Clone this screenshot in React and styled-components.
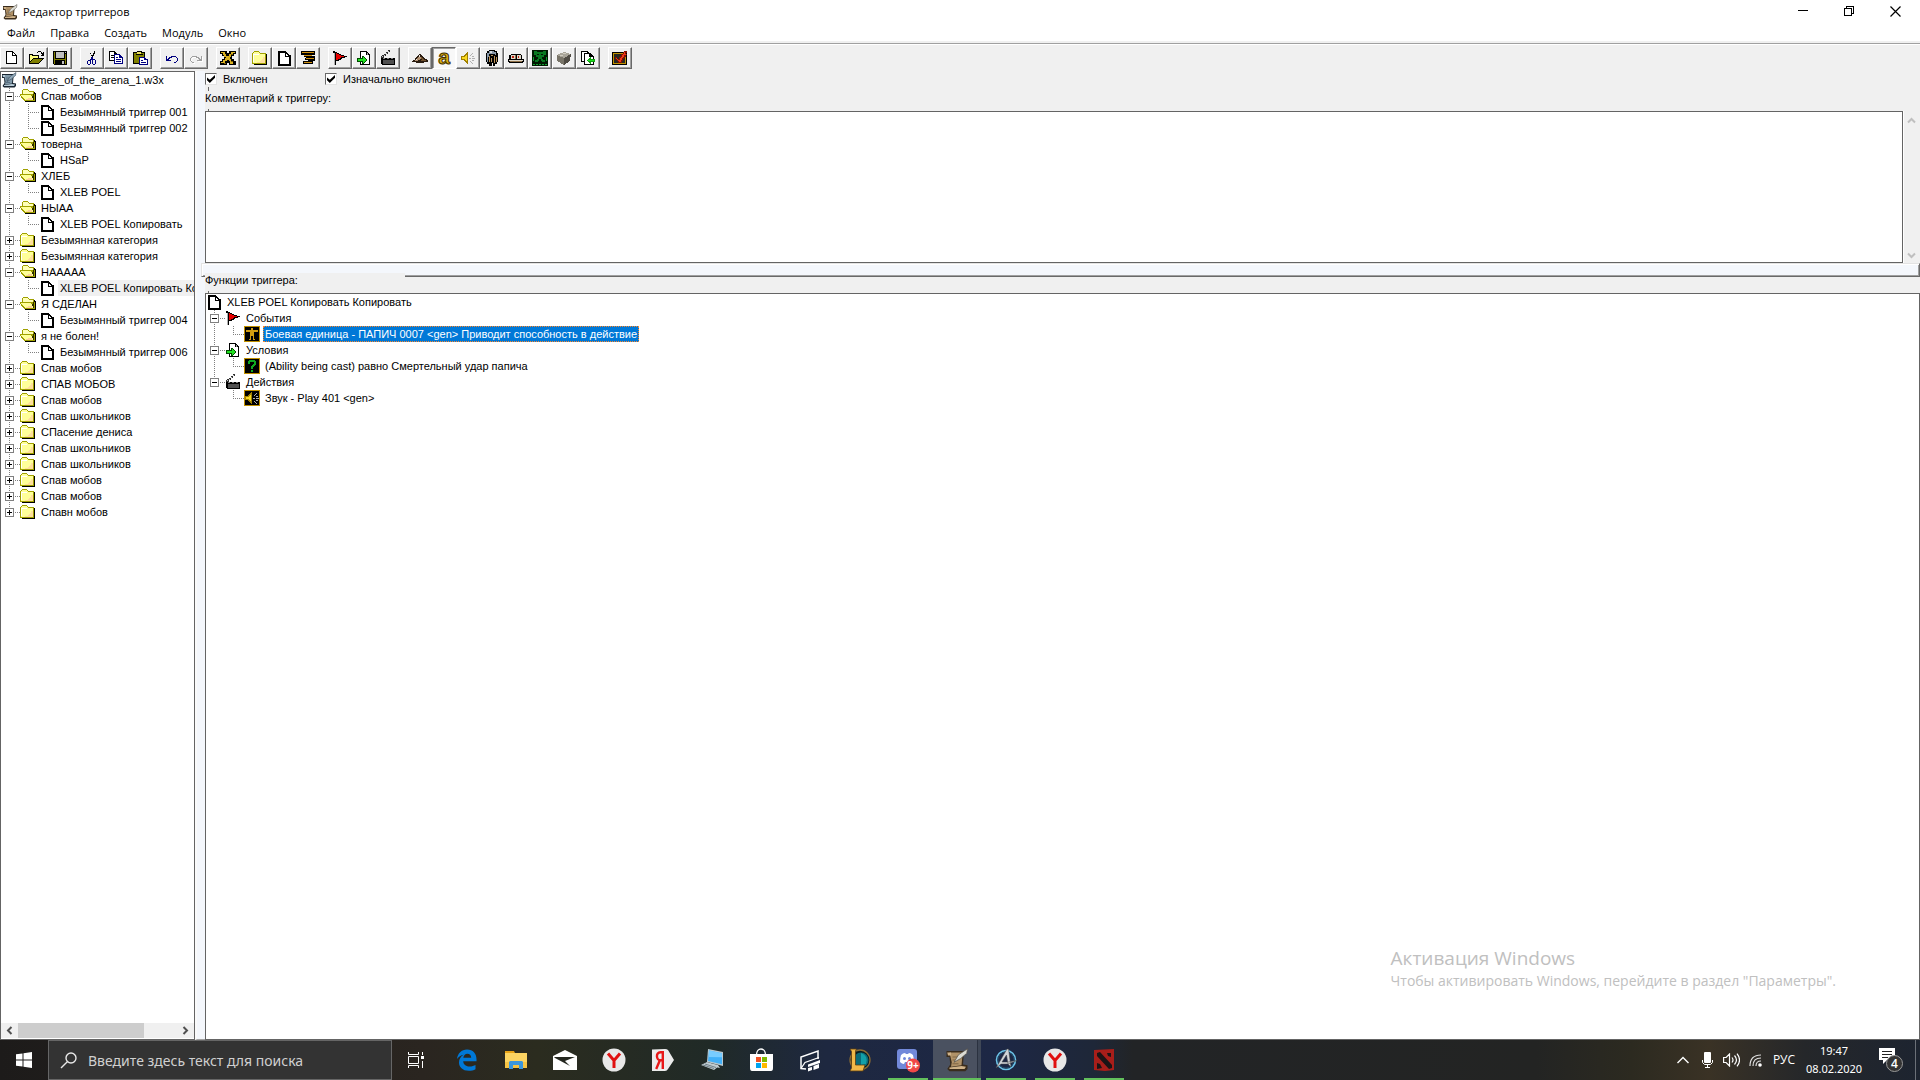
import React from 'react'
import styled, { createGlobalStyle, css } from 'styled-components'

const GlobalStyle = createGlobalStyle`
* {
    box-sizing: border-box;
}
body {
    margin: 0;
    overflow: hidden;
    background: #fff;
}
button, input, textarea {
    font: inherit;
    color: inherit;
    margin: 0;
    padding: 0;
    border: 0;
    border-radius: 0;
    background: none;
    outline: none;
}
ul {
    list-style: none;
    margin: 0;
    padding: 0;
}
svg {
    display: block;
    flex: none;
}
`

const uiFont = `'Open Sans', 'Noto Sans', sans-serif`
const wideFont = `'Noto Sans', 'Open Sans', sans-serif`
const edge = '#646464'

const Desktop = styled.div`
display: flex;
flex-direction: column;
height: 100vh;
font-family: 'Liberation Sans', Arial, sans-serif;
font-size: 11px;
line-height: 14px;
color: #000;
`
const EditorWindow = styled.main`
display: flex;
flex-direction: column;
flex: 1;
min-height: 0;
background: #f0f0f0;
`
const TitleBar = styled.header`
display: flex;
align-items: center;
gap: 5px;
height: 23px;
padding: 0 2px;
background: #fff;
font-family: ${uiFont};
font-size: 11px;
`
const TitleText = styled.h1`
flex: 1;
margin: 0;
font-size: 11px;
font-weight: 400;
`
const WindowButton = styled.button`
display: flex;
align-items: center;
justify-content: center;
width: 46px;
height: 20px;
margin-left: -5px;
&:hover {
    background: #e5e5e5;
}
`
const MenuBar = styled.nav`
display: flex;
height: 18px;
background: #fff;
font-family: ${uiFont};
font-size: 11px;
`
const MenuButton = styled.button`
padding: 0 8px 0 7px;
line-height: 20px;
&:hover {
    background: #e5f3ff;
}
`
const ToolBar = styled.div`
display: flex;
gap: 8px;
height: 30px;
padding-top: 4px;
border-top: 2px solid #f0f0f0;
box-shadow: inset 0 1px #a0a0a0, inset 0 2px #fff;
`
const ToolGroup = styled.div`
display: flex;
`
const ToolButton = styled.button`
display: flex;
align-items: center;
justify-content: center;
width: 24px;
height: 22px;
border: 1px solid;
border-color: #fff #696969 #696969 #fff;
box-shadow: inset -1px -1px #a0a0a0;
${p => p.$pressed && css`
    border-color: #696969 #fff #fff #696969;
    box-shadow: inset 1px 1px #a0a0a0;
    background: #f8f8f8;
`}
`
const Body = styled.div`
display: flex;
flex: 1;
min-height: 0;
`
const SidePane = styled.aside`
display: flex;
flex-direction: column;
flex: none;
width: 195px;
border: 1px solid ${edge};
background: #fff;
`
const TreeArea = styled.div`
flex: 1;
min-height: 0;
overflow: hidden;
`
const HScroll = styled.div`
display: flex;
align-items: center;
height: 15px;
margin-bottom: 1px;
background: #f0f0f0;
`
const ScrollArrow = styled.button`
display: flex;
align-items: center;
justify-content: center;
width: 17px;
height: 15px;
`
const HTrack = styled.div`
flex: 1;
align-self: stretch;
`
const HThumb = styled.div`
width: 79%;
height: 100%;
background: #cdcdcd;
`
const Splitter = styled.div`
flex: none;
width: 10px;
border-left: 2px solid #fafafa;
border-bottom: 1px solid #a0a0a0;
background: #f4f7fc;
cursor: col-resize;
`
const MainPane = styled.section`
display: flex;
flex-direction: column;
flex: 1;
min-width: 0;
`
const CheckRow = styled.div`
display: flex;
height: 16px;
padding-top: 2px;
`
const CheckLabel = styled.label`
display: flex;
align-items: center;
gap: 6px;
height: 12px;
width: 120px;
white-space: nowrap;
`
const CheckBox = styled.input`
appearance: none;
flex: none;
width: 12px;
height: 12px;
background: #fff;
border: 1px solid;
border-color: #696969 #e3e3e3 #e3e3e3 #696969;
&:checked::after {
    content: '';
    display: block;
    width: 8px;
    height: 8px;
    margin: 1px;
    background: #000;
    clip-path: polygon(0 30%, 35% 60%, 100% 0, 100% 35%, 35% 100%, 0 65%);
}
`
const CommentLabel = styled.label`
display: flex;
flex-direction: column;
height: 24px;
&::before, &::after {
    content: '';
    width: 1px;
    height: 4px;
    margin-left: 3px;
    background: #696969;
}
&::after {
    height: 2px;
    margin-top: auto;
}
`
const CommentBox = styled.div`
display: flex;
height: 152px;
`
const CommentInput = styled.textarea`
flex: 1;
resize: none;
border: 1px solid ${edge};
background: #fff;
overflow: hidden;
`
const VScroll = styled.div`
display: flex;
flex-direction: column;
justify-content: space-between;
align-items: center;
width: 17px;
padding: 2px 2px 0 0;
border-left: 1px solid #fff;
`
const HSplitter = styled.div`
flex: none;
height: 14px;
margin-left: -4px;
border: 1px solid;
border-color: #e3e3e3 #696969 #696969 #e3e3e3;
box-shadow: inset 1px 1px #fff, inset -1px -1px #a0a0a0;
background: #f4f7fc;
cursor: row-resize;
`
const FunctionsLabel = styled.h2`
position: relative;
width: 200px;
height: 20px;
margin: -4px 0 0;
background: #f0f0f0;
font-size: 11px;
font-weight: 400;
&::after {
    content: '';
    display: block;
    width: 1px;
    height: 2px;
    margin: 4px 0 0 3px;
    background: #696969;
}
`
const FunctionsPane = styled.div`
flex: 1;
min-height: 0;
border: 1px solid ${edge};
background: #fff;
`
const TreeRow = styled.div`
display: flex;
height: 16px;
white-space: nowrap;
`
// tree lines: a vertical one at 8px and, where the row hangs on it, a dash to the icon
const Gutter = styled.span`
flex: none;
width: 19px;
padding: 4px 0 0 4px;
background-image: repeating-linear-gradient(#808080 0 1px, transparent 1px 2px), repeating-linear-gradient(90deg, #808080 0 1px, transparent 1px 2px);
background-repeat: no-repeat;
background-position: 8px 0, 8px 8px;
background-size: 1px ${p => p.$half ? '8px' : '16px'}, ${p => p.$dash ? '11px' : '0'} 1px;
${p => p.$empty && css`
    background-image: none;
`}
`
const Expander = styled.button`
display: block;
width: 9px;
height: 9px;
border: 1px solid #808080;
background-color: #fff;
background-image: linear-gradient(#000, #000), linear-gradient(#000, #000);
background-repeat: no-repeat;
background-position: 1px 3px, 3px 1px;
background-size: 5px 1px, 1px ${p => p.$open ? '0' : '5px'};
`
const RowLabel = styled.span`
min-width: 0;
overflow: hidden;
margin-left: 3px;
padding: 0 2px;
line-height: 16px;
${p => p.$state === 'idle' && css`
    background: #f0f0f0;
`}
${p => p.$state === 'active' && css`
    background: #0078d7;
    color: #fff;
    outline: 1px dotted #ff8728;
    outline-offset: -1px;
`}
`
const Watermark = styled.div`
position: absolute;
right: 84px;
bottom: 89px;
font-family: ${uiFont};
color: #c0c0c0;
pointer-events: none;
white-space: nowrap;
`
const WatermarkTitle = styled.div`
font-size: 19px;
line-height: 25px;
`
const WatermarkText = styled.div`
font-size: 14px;
line-height: 20px;
`
const TaskBar = styled.footer`
display: flex;
flex: none;
height: 40px;
font-family: ${uiFont};
color: #fff;
background: linear-gradient(90deg, #1d1b1a 0%, #2a2520 22%, #2b2c1f 28%, #202a27 37%, #1e2840 43%, #1d2745 52%, #1e2738 57%, #222426 59%, #232423 80%, #2c2a20 85%, #3a3225 89%, #25272a 94%, #1d2430 100%);
`
const StartButton = styled.button`
display: flex;
align-items: center;
justify-content: center;
width: 48px;
`
const SearchBox = styled.label`
display: flex;
align-items: center;
gap: 11px;
width: 344px;
padding-left: 11px;
border: 1px solid #666;
background: #333;
`
const SearchInput = styled.input`
flex: 1;
min-width: 0;
font-family: ${wideFont};
font-size: 14px;
color: #d8d8d8;
&::placeholder {
    color: #d0d0d0;
    opacity: 1;
}
`
const TaskList = styled.div`
display: flex;
gap: 1px;
`
const TaskButton = styled.button`
display: flex;
align-items: center;
justify-content: center;
width: 48px;
&:first-child {
    margin-right: 2px;
}
${p => p.$running && css`
    background: linear-gradient(#62c05c, #62c05c) center bottom / 40px 2px no-repeat;
`}
${p => p.$current && css`
    background: linear-gradient(#62c05c, #62c05c) center bottom / 48px 2px no-repeat, linear-gradient(90deg, #4a5160 44px, #2b3240 44px 45px, #3f4756 45px);
`}
`
const Tray = styled.div`
display: flex;
align-items: center;
margin-left: auto;
`
const TrayButton = styled.button`
display: flex;
align-items: center;
justify-content: center;
width: 24px;
height: 40px;
`
const Language = styled.button`
width: 34px;
height: 40px;
font-size: 12px;
`
const Clock = styled.button`
width: 66px;
margin-right: 11px;
font-family: ${wideFont};
font-size: 11px;
line-height: 18px;
text-align: center;
`
const Notify = styled.button`
display: flex;
align-items: center;
height: 40px;
width: 37px;
`
const ShowDesktop = styled.button`
width: 5px;
height: 40px;
border-left: 1px solid #6b7078;
`

const Pix = ({ size = 16, children }) => (
    <svg width={size} height={size} viewBox={`0 0 ${size} ${size}`} shapeRendering="crispEdges" aria-hidden="true">{children}</svg>
)
const Draw = ({ w = 24, h = w, children }) => (
    <svg width={w} height={h} viewBox={`0 0 ${w} ${h}`} fill="none" aria-hidden="true">{children}</svg>
)

const DocIcon = () => (
    <Pix>
        <path fill="#000" d="M2 1h8v1h1v1h1v1h1v1h2v11H2z" />
        <path fill="#fff" d="M4 3h5v4h4v7H4zM10 4h1v1h1v1h-2z" />
    </Pix>
)
const NewIcon = () => (
    <Pix>
        <path fill="#000" d="M2 1h7v1h1v1h1v1h1v1h1v9H2z" />
        <path fill="#fff" d="M3 2h5v4h4v7H3zM9 3v2h2V4h-1V3z" />
    </Pix>
)
const OpenIcon = () => (
    <Pix>
        <path fill="#000" d="M10 1h3v1h-3zM9 2h1v1H9zM13 2h1v1h1V2h1v4h-3V5h1V4h-1zM1 4h4v1h6v3h5v1h-1v1h-1v1h-1v1h-1v1h-1v1H1z" />
        <path fill="#ffff80" d="M2 5h2v1h6v2H5v1H4v1H3v1H2z" />
        <path fill="#808000" d="M5 9h9v1h-1v1h-1v1h-1v1H2v-1h1v-1h1v-1h1z" />
    </Pix>
)
const SaveIcon = () => (
    <Pix>
        <path fill="#000" d="M1 1h14v14H2v-1H1z" />
        <path fill="#808000" d="M2 2h1v12H2zM13 4h1v10h-1zM3 9h10v1H3z" />
        <path fill="#c0c0c0" d="M4 2h8v6H4zM10 11h2v3h-2zM13 2h1v1h-1z" />
    </Pix>
)
const CutIcon = () => (
    <Pix>
        <path fill="#000" d="M5 1h1v3h1v2h1v1h1V6h1V4h1V1h-1v2H9v2H7V3H6V1z" />
        <path fill="#000080" d="M7 7h2v2h2v1h1v4h-1v1H9v-1H8v-4H7v4H6v1H4v-1H3v-3h1v-1h2V9h1z" />
        <path fill="#f0f0f0" d="M4 11h2v3H4zM9 10h2v4H9z" />
    </Pix>
)
const CopyIcon = () => (
    <Pix>
        <path fill="#000" d="M1 1h6v1h1v1h1v8H1z" />
        <path fill="#fff" d="M2 2h4v2h2v6H2z" />
        <path fill="#000" d="M3 5h3v1H3zM3 7h3v1H3z" />
        <path fill="#000080" d="M6 4h6v1h1v1h1v1h1v7H6z" />
        <path fill="#fff" d="M7 5h4v3h3v5H7z" />
        <path fill="#000080" d="M8 7h2v1H8zM8 9h5v1H8zM8 11h5v1H8z" />
    </Pix>
)
const PasteIcon = () => (
    <Pix>
        <path fill="#000" d="M5 1h5v1h3v12H1V2h4z" />
        <path fill="#808000" d="M2 3h10v10H2z" />
        <path fill="#e8e060" d="M5 2h4v2H5z" />
        <path fill="#000" d="M4 4h7v1H4z" />
        <path fill="#000080" d="M7 7h6v1h1v1h2v6H7z" />
        <path fill="#fff" d="M8 8h4v2h3v4H8z" />
        <path fill="#000080" d="M9 10h2v1H9zM9 12h5v1H9z" />
    </Pix>
)
const UndoIcon = () => (
    <Pix>
        <path fill="#000080" d="M2 6h1v3h1V8h1V7h2V6h5v1h1v1h1v3h-1v1h-1v1h-2v-1h2v-1h1V8h-1V7H8v1H6v1H5v1h2v1H2z" />
    </Pix>
)
const RedoIcon = () => {
    const arrow = 'M14 6h-1v3h-1V8h-1V7H9V6H4v1H3v1H2v3h1v1h1v1h2v-1H4v-1H3V8h1V7h4v1h2v1h1v1H9v1h5z'
    return (
        <Pix>
            <path fill="#fff" transform="translate(1 1)" d={arrow} />
            <path fill="#a0a0a0" d={arrow} />
        </Pix>
    )
}
const VarIcon = () => (
    <Pix>
        <path fill="#000" d="M0 1h7v2h2V1h7v3h-2v2h-2v3h2v2h2v4H9v-2H7v2H0v-4h2V9h2V6H2V4H0z" />
        <path fill="#d8b020" d="M1 2h4v2h1v2h3V4h2V2h4v1h-2v2h-2v2h-1v2h1v2h2v3h-3v-3H9v-1H7v1H5v2H1v-1h2v-2h2V8h1V7H4V5H3V3H1z" />
        <path fill="#806000" d="M4 13h2v1H4zM11 11h2v1h-2zM11 4h2v1h-2z" />
    </Pix>
)
const FolderIcon = () => (
    <Pix>
        <path fill="#000" d="M2 4h13v11H2z" />
        <path fill="#a0a000" d="M2 1h5v1h1v1h6v11H0V3h1V2h1z" />
        <path fill="#ffff99" d="M2 2h5v1h1v1h5v9H1V3h1z" />
        <path fill="#fff" d="M1 4h1v8H1zM2 4h5v1H2z" />
        <path fill="#ffd29c" d="M11 7h2v6H5v-1h3v-1h1v-1h1V9h1z" opacity=".7" />
    </Pix>
)
const FolderOpenIcon = () => (
    <Pix>
        <path fill="#000" d="M5 4h10v1h1v9H5v-1h9v-1z" />
        <path fill="#a0a000" d="M3 1h5v1h1v1h5v3h1v7H4v-1H3v-1H2v-1H1V8H0V6h2V2h1z" />
        <path fill="#ffffb8" d="M3 2h5v1h1v1h4v2H3z" />
        <path fill="#ffff99" d="M1 7h10v1h1v2h1v2H5v-1H4v-1H3V9H2V8H1z" />
        <path fill="#ffd29c" d="M8 10h4v2H6v-1h2z" />
        <path fill="#303000" d="M13 6h1v6h-1v-2h-1V8h1z" />
    </Pix>
)
const CommentIcon = () => (
    <Pix>
        <path fill="#000" d="M1 1h14v4H1zM4 5h11v3H4zM5 8h10v3H5zM3 11h10v3H3z" />
        <path fill="#f0f0f0" d="M11 5h4v1h-4zM4 7h2v1H4zM5 10h3v1H5z" />
        <path fill="#d09010" d="M2 2h12v1H2zM4 5h8v1H4zM6 8h8v1H6zM4 12h8v1H4z" />
    </Pix>
)
const FlagIcon = () => (
    <Pix>
        <path fill="#000" d="M1 1h2v1h2v1h2v1h2v1h3v1h3v1h-2v1h-3v1H9v1H7v1H4v4H2V3H1z" />
        <path fill="#b0b0b0" d="M2 3h1v12H2z" />
        <path fill="#e80000" d="M4 3h1v1h2v1h2v1h3v1H9v1H8v1H6v1H4z" />
    </Pix>
)
const ConditionIcon = () => (
    <Pix>
        <path fill="#000" d="M4 1h7v1h1v1h1v1h1v11H4z" />
        <path fill="#fff" d="M5 2h5v3h3v9H5z" />
        <path fill="#999" d="M11 3h1v2h-1z" />
        <path fill="#004800" d="M1 8h5V6h2v1h1v1h1v1h1v2h-1v1H9v1H8v1H6v-2H1z" />
        <path fill="#20e020" d="M2 9h5V7h1v1h1v1h1v2H9v1H8v1H7v-2H2z" />
    </Pix>
)
const ActionIcon = () => (
    <Pix>
        <path fill="#303030" d="M8 0h2v2H8v2H6v2H4v2H1V6h1V5h2V4h2V2h2z" />
        <path fill="#000" d="M1 8h14v7H2v-1H1z" />
        <path fill="#c8c8c8" d="M8 1h1v1H8zM6 3h1v1H6zM4 5h1v1H4zM2 6h1v1H2z" />
        <path fill="#505050" d="M3 10h11v4H3z" />
        <path fill="#808080" d="M3 8h2v1H3zM7 8h2v1H7zM11 8h2v1h-2z" />
    </Pix>
)
const TerrainIcon = () => (
    <Pix>
        <path fill="#2a1c10" d="M7 4h2v1h1v1h1v1h1v1h1v1h2v1h1v2h-4v1H4v-1H0v-1h1v-1h2V8h1V7h1V6h1V5h1z" />
        <path fill="#b09070" d="M7 5h1v2h1v2H8v1H6v1H3v-1h2V8h1V7h1z" />
        <path fill="#e8e0d8" d="M7 5h1v2H7zM4 9h1v1H4z" />
        <path fill="#70502c" d="M9 7h1v1h1v1h1v1h2v1H9v-1h1z" />
    </Pix>
)
const UnitDataIcon = () => (
    <svg width="16" height="16" viewBox="0 0 16 16" aria-hidden="true">
        <text x="8" y="14" textAnchor="middle" fontFamily="Liberation Sans, sans-serif" fontSize="21" fontWeight="700" fill="#e0b010" stroke="#403000" strokeWidth="1">a</text>
    </svg>
)
const SoundIcon = ({ dark }) => (
    <Pix>
        {dark && <path fill="#c09000" d="M0 0h16v16H0z" />}
        {dark && <path fill="#000" d="M1 1h14v14H1z" />}
        <path fill="#a08000" d="M7 2h1v12H7v-1H6v-1H5v-1H4v-1H1V6h3V5h1V4h1V3h1z" />
        <path fill="#f8d820" d="M6 5h1v6H6v-1H5V9H2V7h3V6h1z" />
        <path fill="#b0b0b0" d="M9 8h2v1H9zM12 8h3v1h-3zM10 5h1V4h1V3h1v1h-1v1h-1v1h-1zM12 6h2v1h-2zM10 11h1v1h1v1h1v1h-1v-1h-1v-1h-1zM12 10h2v1h-2z" />
    </Pix>
)
const HeroIcon = () => (
    <Pix>
        <path fill="#000" d="M5 0h6v1h2v2h1v9h-1v2h-2v2H9v-3H8v3H5v-2H3v-2H2V3h1V1h2z" />
        <path fill="#8898a8" d="M5 1h5v1h2v3h-1V4H5v3H4v5H3V3h2z" />
        <path fill="#d0d8e0" d="M6 1h2v2H6z" />
        <path fill="#b89058" d="M5 6h1v6H5zM7 5h2v1H7zM10 6h1v7h-1zM7 8h1v4H7zM12 7h1v5h-1z" />
    </Pix>
)
const CampIcon = () => (
    <Pix>
        <path fill="#000" d="M3 4h10v1h1v4h2v3h-1v1H1v-1H0V9h1V5h2z" />
        <path fill="#e0d8c8" d="M3 5h4v4H3zM9 5h4v4H9zM1 10h14v1H1z" />
        <path fill="#c02010" d="M4 6h2v2H4zM10 6h1v2h-1z" />
        <path fill="#907048" d="M2 11h12v1H2zM7 5h1v4H7z" />
    </Pix>
)
const GridIcon = () => (
    <Pix>
        <path fill="#001800" d="M0 0h16v16H0z" />
        <path fill="#087820" d="M2 1h3v1h6V1h3v4h-2v2h-2v2h1v1h2v2h-3v-1H9V9H7v2H6v1H3v-2h2V9h1V7H4V5H2z" />
        <path fill="#001800" d="M5 4h2v1H5zM9 4h2v1H9z" />
        <path fill="#10a030" d="M1 14h2v1H1zM4 14h2v1H4zM7 14h2v1H7zM10 14h2v1h-2zM13 14h2v1h-2zM1 7h1v4H1zM14 7h1v4h-1z" />
    </Pix>
)
const CubeIcon = () => (
    <Pix>
        <path fill="#a8a498" d="M1 5l7-3 7 2-7 4z" />
        <path fill="#787468" d="M1 5l7 3v7l-7-4z" />
        <path fill="#504c44" d="M8 8l7-4-1 7-6 4z" />
        <path fill="#d0ccc0" d="M7 3h3v1H7zM4 5h3v1H4z" />
    </Pix>
)
const ImportIcon = () => (
    <Pix>
        <path fill="#000" d="M1 1h7v1h1v1h2v1h1v1h1v1h1v9H4v-3H1z" />
        <path fill="#fff" d="M2 2h5v1H4v8H2zM5 4h4v3h4v7H5z" />
        <path fill="#10a010" d="M7 10h1V9h1V8h1V7h1v2h4v3h-4v2h-1v-1H9v-1H8v-1H7z" />
        <path fill="#20e020" d="M8 10h6v1H8z" />
    </Pix>
)
const CheckIcon = () => (
    <Pix>
        <path fill="#000" d="M0 2h15v13H0z" />
        <path fill="#c09000" d="M1 3h13v11H1z" />
        <path fill="#282820" d="M2 4h11v9H2z" />
        <path fill="#801000" d="M3 7h2v2h2V7h1V6h1V4h2V2h1V1h3v2h-1v1h1v1h-1v2h-1v1h-1v1h-1v2h-1v2H6v-2H5v-1H4V9H3z" />
        <path fill="#f03818" d="M4 8h1v1h1v1h2V8h1V7h1V5h1V4h1V2h1v2h1v1h-2v2h-1v1h-1v2H9v2H7v-1H6v-1H5V9H4z" />
    </Pix>
)
const UnitIcon = () => (
    <Pix>
        <path fill="#c09000" d="M0 0h16v16H0z" />
        <path fill="#000" d="M1 1h14v14H1z" />
        <path fill="#d09c10" d="M7 2h2v2H7zM2 4h12v2h-4v8H9v-4H7v4H6V6H2zM5 13h2v1H5zM9 13h2v1H9z" />
    </Pix>
)
const QuestionIcon = () => (
    <Pix>
        <path fill="#c09000" d="M0 0h16v16H0z" />
        <path fill="#000" d="M1 1h14v14H1z" />
        <path fill="#10a820" d="M5 2h6v1h1v4h-1v1h-1v1H9v2H7V8h1V7h1V6h1V4H6v2H4V3h1zM7 12h2v2H7z" />
    </Pix>
)
const ScrollIcon = ({ size = 16, blue }) => (
    <svg width={size} height={size} viewBox="0 0 16 16" aria-hidden="true">
        <path fill={blue ? '#182430' : '#3a2c1c'} d="M1 2h11.500v3l-.5 6 3 .500v2.500l-1.500 1.500H3L1.500 14l2-3-.5-5H1z" />
        <path fill={blue ? '#8098a8' : '#b09268'} d="M3 3h8.500v3L11 11.500l-7 1 .5-3z" />
        <path fill={blue ? '#b8ccd8' : '#cfb288'} d="M1.500 3H4v2H2zM3 13l8-1 3 .500-1 1.500H3z" />
        <path stroke={blue ? '#405868' : '#7c6242'} strokeWidth=".6" fill="none" d="M5 6h3M5 8h2M5 10.500h4" />
        <path fill={blue ? '#90a8b8' : '#dcdcd4'} stroke={blue ? '#283848' : '#555048'} strokeWidth=".5" d="M6 9.500l3-5L15 .500l-.500 3-4 3.500z" />
    </svg>
)

const SearchIcon = () => (
    <Draw w={17}>
        <circle cx="11" cy="6" r="5" stroke="#e8e8e8" strokeWidth="1.4" />
        <path d="M7.3 9.7L1 16" stroke="#e8e8e8" strokeWidth="1.4" />
    </Draw>
)
const WindowsIcon = () => (
    <Draw w={16}>
        <path fill="#fff" d="M0 2.3l6.5-.9v6.1H0zM7.5 1.2L16 0v7.5H7.5zM0 8.5h6.5v6.1L0 13.7zM7.5 8.5H16V16l-8.5-1.2z" />
    </Draw>
)
const TaskViewIcon = () => (
    <Draw w={16}>
        <path stroke="#fff" d="M.5 0v2.5h10V0M.5 4.5h10v7H.5zM.5 16v-2.500h10V16M14.500 0v3M14.500 9v7" />
        <path fill="#fff" d="M13 4h3v3h-3z" />
    </Draw>
)
const EdgeIcon = () => (
    <Draw w={22}>
        <path fill="#0078d7" d="M1 10C1.600 4.500 5.500.5 11 .5c6 0 9.500 4 9.500 9.800v2H7.200c.2 3.700 3.300 5.200 6.500 5.200 2.300 0 4.200-.6 5.800-1.500v4.200c-1.800 1-4.200 1.600-6.700 1.600C6.500 21.800 3 18 3 13.500c0-3.400 1.800-6.200 4.700-7.700C4.800 6.300 2.600 7.700 1 10zm6.300-1.200h7.900C15.100 6 13.600 4.700 11.400 4.700c-2.400 0-3.700 1.800-4.100 4.100z" />
    </Draw>
)
const ExplorerIcon = () => (
    <Draw w={22} h={20}>
        <path fill="#e8a317" d="M0 1h9l1 2H0z" />
        <path fill="#fcd462" d="M0 3h22v15H0z" />
        <path fill="#f5c344" d="M0 12h22v6H0z" />
        <path fill="#3a96dd" d="M4 19v-7l1-1h12l1 1v7h-4v-4H8v4z" />
    </Draw>
)
const MailIcon = () => (
    <Draw w={24} h={20}>
        <path fill="#fff" d="M0 6l12-6 12 6v14H0z" />
        <path fill="#24271f" d="M1 7h21l-10 4 5 5-15-8z" />
    </Draw>
)
const YandexBrowserIcon = () => (
    <Draw w={24}>
        <circle cx="12" cy="12" r="11.500" fill="#e8e8e8" />
        <path stroke="#e01010" strokeWidth="3" d="M6 5.500l6 7 6-7M12 12v8" />
    </Draw>
)
const YandexIcon = () => (
    <Draw w={24}>
        <path fill="#ececec" d="M1 1.500L14 1q2 0 3 1l6 10-6 9q-1 2-3 2H1z" />
        <path stroke="#e81818" strokeWidth="2.400" d="M11.800 21V4.200H9.500c-5 0-4.500 8 0 8h2M9 12L5.200 21" />
    </Draw>
)
const ComputerIcon = () => (
    <Draw w={24}>
        <path fill="#b8c8d0" d="M8 1l15 3v14L7 14z" />
        <path fill="#42b0f8" d="M9 2.500l13 2.800v10.900L8 13z" />
        <path fill="#78ccff" d="M9 2.500l13 2.800v4L9 9z" />
        <path fill="#c0ccd2" d="M1 17l6-3 12 4-5 4zM10 15l8 2 2 3-5-1z" />
        <path stroke="#708088" d="M3 17l11 3.500M5 16l11 3.500" />
    </Draw>
)
const StoreIcon = () => (
    <Draw w={24}>
        <path stroke="#fff" strokeWidth="1.300" d="M7.500 7c0-8 9-8 9 0" />
        <path fill="#fff" d="M1 6h23v14q0 3-2 3H3q-2 0-2-3z" />
        <path fill="#f25022" d="M7 9h5v5H7z" />
        <path fill="#7fba00" d="M13 9h5v5h-5z" />
        <path fill="#00a4ef" d="M7 15h5v5H7z" />
        <path fill="#ffb900" d="M13 15h5v5h-5z" />
    </Draw>
)
const PanelsIcon = () => (
    <Draw w={24}>
        <path stroke="#fff" strokeWidth="1.500" d="M8 21l-5-.500V9l17-6v8" />
        <path stroke="#fff" strokeWidth="1.300" d="M3 20.500l4-6L21 9.500" />
        <path fill="#fff" d="M10 16.500L22 12v3l-12 4zM10 20l4-1v3l-4 1.500zM15.500 18l5.500-2v4l-5.500 2z" />
    </Draw>
)
const LeagueIcon = () => (
    <Draw w={24}>
        <circle cx="13" cy="12" r="10" fill="#071c22" stroke="#8c6c34" strokeWidth="1.300" />
        <circle cx="14" cy="12" r="7.500" fill="#0b6b78" />
        <path fill="#12a0a8" d="M14 5q8 3 5 11l-5 1z" />
        <path fill="#f0b848" stroke="#5c3c10" strokeWidth=".8" d="M3 1h6.500l-1 2v14H18l-2 6H3l1.500-3V3.500z" />
    </Draw>
)
const DiscordIcon = () => (
    <svg width="24" height="26" viewBox="0 0 24 26" aria-hidden="true">
        <rect x="1" y="2" width="20" height="20" rx="3" fill="#7289da" />
        <path fill="#fff" d="M5 8q2-2 4-2l1 1h2l1-1q2 0 4 2 1 4 1 7-2 2-4 2l-1-2H9l-1 2q-2 0-4-2 0-4 1-7z" />
        <circle cx="8.500" cy="11.500" r="1.500" fill="#7289da" />
        <circle cx="13.500" cy="11.500" r="1.500" fill="#7289da" />
        <circle cx="17" cy="18.500" r="7" fill="#f04747" />
        <text x="17" y="22" textAnchor="middle" fontFamily="Open Sans, sans-serif" fontSize="10" fontWeight="700" fill="#fff">9+</text>
    </svg>
)
const AIcon = () => (
    <Draw w={24}>
        <circle cx="12" cy="12" r="9.500" stroke="#6cc4e8" strokeWidth="1.600" />
        <circle cx="12" cy="12" r="8" stroke="#204868" />
        <path fill="#d0d4d8" stroke="#444" strokeWidth=".5" d="M2 20L13 1h1.500L17 19l-3-3-1.500-9L8 14h6l9-1.500-9 3.500H7z" />
    </Draw>
)
const DotaIcon = () => (
    <Draw w={22}>
        <path fill="#a81e1a" d="M1 1l20-1v21l-9 1-11-1z" />
        <path fill="#1c1416" d="M4 4l3-1 12 13v3l-3 1L4 7zM14 4l4 0 0 4-3-1zM4 14l3 1 2 4-5 1z" />
    </Draw>
)
const DarkSoundIcon = () => <SoundIcon dark />
const EditorTaskIcon = () => <ScrollIcon size={24} />

const toolGroups = [
    [['Новый', NewIcon], ['Открыть', OpenIcon], ['Сохранить', SaveIcon]],
    [['Вырезать', CutIcon], ['Копировать', CopyIcon], ['Вставить', PasteIcon]],
    [['Отменить', UndoIcon], ['Повторить', RedoIcon]],
    [['Переменные', VarIcon]],
    [['Новая категория', FolderIcon], ['Новый триггер', DocIcon], ['Новый комментарий', CommentIcon]],
    [['Новое событие', FlagIcon], ['Новое условие', ConditionIcon], ['Новое действие', ActionIcon]],
    [
        ['Ландшафт', TerrainIcon], ['Триггеры', UnitDataIcon, true], ['Звук', SoundIcon], ['Объекты', HeroIcon],
        ['Кампания', CampIcon], ['ИИ', GridIcon], ['Менеджер объектов', CubeIcon], ['Импорт', ImportIcon],
    ],
    [['Проверить карту', CheckIcon]],
]

const category = (label, ...children) => ({
    label,
    icon: children.length ? FolderOpenIcon : FolderIcon,
    children: children.map(name => ({ label: name, icon: DocIcon })),
})
const triggers = [
    category('Спав мобов', 'Безымянный триггер 001', 'Безымянный триггер 002'),
    category('товерна', 'HSaP'),
    category('ХЛЕБ', 'XLEB POEL'),
    category('НЫАА', 'XLEB POEL Копировать'),
    category('Безымянная категория'),
    category('Безымянная категория'),
    category('НААААА', 'XLEB POEL Копировать Копировать'),
    category('Я СДЕЛАН', 'Безымянный триггер 004'),
    category('я не болен!', 'Безымянный триггер 006'),
    category('Спав мобов'),
    category('СПАВ МОБОВ'),
    category('Спав мобов'),
    category('Спав школьников'),
    category('СПасение дениса'),
    category('Спав школьников'),
    category('Спав школьников'),
    category('Спав мобов'),
    category('Спав мобов'),
    category('Спавн мобов'),
]
triggers[6].children[0].state = 'idle'

const functions = [
    { label: 'События', icon: FlagIcon, children: [{ label: 'Боевая единица - ПАПИЧ 0007 <gen> Приводит способность в действие', icon: UnitIcon, state: 'active' }] },
    { label: 'Условия', icon: ConditionIcon, children: [{ label: '(Ability being cast) равно Смертельный удар папича', icon: QuestionIcon }] },
    { label: 'Действия', icon: ActionIcon, children: [{ label: 'Звук - Play 401 <gen>', icon: DarkSoundIcon }] },
]

const Tree = ({ root, rootIcon, items }) => (
    <div>
        <TreeRow>{rootIcon}<RowLabel>{root}</RowLabel></TreeRow>
        <ul>
            {items.map((item, i) => {
                const last = i === items.length - 1
                const open = item.children.length > 0
                return (
                    <li key={i}>
                        <TreeRow>
                            <Gutter $dash $half={last}>
                                <Expander $open={open} aria-label={open ? 'Свернуть' : 'Развернуть'} />
                            </Gutter>
                            <item.icon />
                            <RowLabel>{item.label}</RowLabel>
                        </TreeRow>
                        <ul>
                            {item.children.map((child, n) => (
                                <li key={n}>
                                    <TreeRow>
                                        <Gutter $empty={last} />
                                        <Gutter $dash $half={n === item.children.length - 1} />
                                        <child.icon />
                                        <RowLabel $state={child.state}>{child.label}</RowLabel>
                                    </TreeRow>
                                </li>
                            ))}
                        </ul>
                    </li>
                )
            })}
        </ul>
    </div>
)

const Arrow = ({ turn = 0, color = '#505050' }) => (
    <svg width="9" height="9" viewBox="0 0 9 9" aria-hidden="true">
        <path d="M1 6.500L4.500 3 8 6.500" fill="none" stroke={color} strokeWidth="2" transform={`rotate(${turn} 4.500 4.500)`} />
    </svg>
)

const tasks = [
    ['Edge', EdgeIcon], ['Проводник', ExplorerIcon], ['Почта', MailIcon], ['Яндекс.Браузер', YandexBrowserIcon],
    ['Яндекс', YandexIcon], ['Компьютер', ComputerIcon], ['Магазин', StoreIcon], ['Панели', PanelsIcon],
    ['League of Legends', LeagueIcon], ['Discord', DiscordIcon, true],
    ['Редактор', EditorTaskIcon, true, true],
    ['Arc', AIcon, true], ['Яндекс', YandexBrowserIcon, true], ['Dota', DotaIcon, true],
]

const App = () => {
    return (
        <Desktop>
            <GlobalStyle />
            <EditorWindow>
                <TitleBar>
                    <ScrollIcon />
                    <TitleText>Редактор триггеров</TitleText>
                    <WindowButton aria-label="Свернуть">
                        <Pix size={11}><path fill="#000" d="M0 4h10v1H0z" /></Pix>
                    </WindowButton>
                    <WindowButton aria-label="Восстановить">
                        <Pix size={11}><path fill="#000" d="M2 0h8v8H8v2H0V2h2zM3 1v1h5v5h1V1zM1 3v6h6V3z" fillRule="evenodd" /></Pix>
                    </WindowButton>
                    <WindowButton aria-label="Закрыть">
                        <Draw w={11}><path stroke="#000" strokeWidth="1.200" d="M.5.5l10 10M10.500.5l-10 10" /></Draw>
                    </WindowButton>
                </TitleBar>
                <MenuBar>
                    {['Файл', 'Правка', 'Создать', 'Модуль', 'Окно'].map(name => <MenuButton key={name}>{name}</MenuButton>)}
                </MenuBar>
                <ToolBar>
                    {toolGroups.map((group, i) => (
                        <ToolGroup key={i}>
                            {group.map(([name, Icon, pressed]) => (
                                <ToolButton key={name} aria-label={name} $pressed={pressed}><Icon /></ToolButton>
                            ))}
                        </ToolGroup>
                    ))}
                </ToolBar>
                <Body>
                    <SidePane>
                        <TreeArea>
                            <Tree root="Memes_of_the_arena_1.w3x" rootIcon={<ScrollIcon blue />} items={triggers} />
                        </TreeArea>
                        <HScroll>
                            <ScrollArrow aria-label="Влево"><Arrow turn={-90} /></ScrollArrow>
                            <HTrack><HThumb /></HTrack>
                            <ScrollArrow aria-label="Вправо"><Arrow turn={90} /></ScrollArrow>
                        </HScroll>
                    </SidePane>
                    <Splitter />
                    <MainPane>
                        <CheckRow>
                            <CheckLabel><CheckBox type="checkbox" defaultChecked />Включен</CheckLabel>
                            <CheckLabel><CheckBox type="checkbox" defaultChecked />Изначально включен</CheckLabel>
                        </CheckRow>
                        <CommentLabel htmlFor="comment">Комментарий к триггеру:</CommentLabel>
                        <CommentBox>
                            <CommentInput id="comment" />
                            <VScroll>
                                <ScrollArrow aria-label="Вверх"><Arrow color="#bfbfbf" /></ScrollArrow>
                                <ScrollArrow aria-label="Вниз"><Arrow turn={180} color="#bfbfbf" /></ScrollArrow>
                            </VScroll>
                        </CommentBox>
                        <HSplitter />
                        <FunctionsLabel>Функции триггера:</FunctionsLabel>
                        <FunctionsPane>
                            <Tree root="XLEB POEL Копировать Копировать" rootIcon={<DocIcon />} items={functions} />
                        </FunctionsPane>
                    </MainPane>
                </Body>
            </EditorWindow>
            <TaskBar>
                <StartButton aria-label="Пуск"><WindowsIcon /></StartButton>
                <SearchBox>
                    <SearchIcon />
                    <SearchInput aria-label="Поиск" placeholder="Введите здесь текст для поиска" />
                </SearchBox>
                <TaskList>
                    <TaskButton aria-label="Представление задач"><TaskViewIcon /></TaskButton>
                    {tasks.map(([name, Icon, running, current], i) => (
                        <TaskButton key={i} aria-label={name} $running={running} $current={current}><Icon /></TaskButton>
                    ))}
                </TaskList>
                <Tray>
                    <TrayButton aria-label="Скрытые значки">
                        <Draw w={12} h={8}><path stroke="#fff" strokeWidth="1.400" d="M.5 7L6 1.500 11.500 7" /></Draw>
                    </TrayButton>
                    <TrayButton aria-label="Микрофон">
                        <Draw w={11} h={16}>
                            <rect x="2" y="0" width="7" height="11" rx="1" fill="#fff" />
                            <path stroke="#fff" d="M.5 8v2.500l2 2h6l2-2V8M5.500 12v3M3 15.500h5" />
                        </Draw>
                    </TrayButton>
                    <TrayButton aria-label="Громкость">
                        <Draw w={17} h={14}><path stroke="#fff" strokeWidth="1.200" d="M.6 4.500h2.500L6.500 1v12L3.100 9.500H.6zM9 4.500q2 2.500 0 5M11.500 2.500q4 4.500 0 9M14 .6q5 6.400 0 12.800" /></Draw>
                    </TrayButton>
                    <TrayButton aria-label="Сеть">
                        <Draw w={13}>
                            <path stroke="#ddd" strokeWidth="1.200" d="M1 12Q1 1 12 1M4 12Q4 4 12 4M7 12Q7 7 12 7" />
                            <circle cx="11" cy="11" r="1.800" fill="#fff" />
                        </Draw>
                    </TrayButton>
                    <Language>РУС</Language>
                    <Clock>19:47<br />08.02.2020</Clock>
                    <Notify aria-label="Уведомления">
                        <svg width="26" height="26" viewBox="0 0 26 26" aria-hidden="true">
                            <path fill="#fff" d="M1 1h16v12H9l-4 4v-4H1z" />
                            <path stroke="#222" d="M4 4.500h10M4 7.500h10M4 10.500h6" />
                            <circle cx="16.500" cy="16.500" r="8" fill="#333" stroke="#999" />
                            <text x="16.500" y="21" textAnchor="middle" fontFamily="Open Sans, sans-serif" fontSize="12" fontWeight="600" fill="#fff">4</text>
                        </svg>
                    </Notify>
                    <ShowDesktop aria-label="Рабочий стол" />
                </Tray>
            </TaskBar>
            <Watermark>
                <WatermarkTitle>Активация Windows</WatermarkTitle>
                <WatermarkText>Чтобы активировать Windows, перейдите в раздел "Параметры".</WatermarkText>
            </Watermark>
        </Desktop>
    )
}

export default App
